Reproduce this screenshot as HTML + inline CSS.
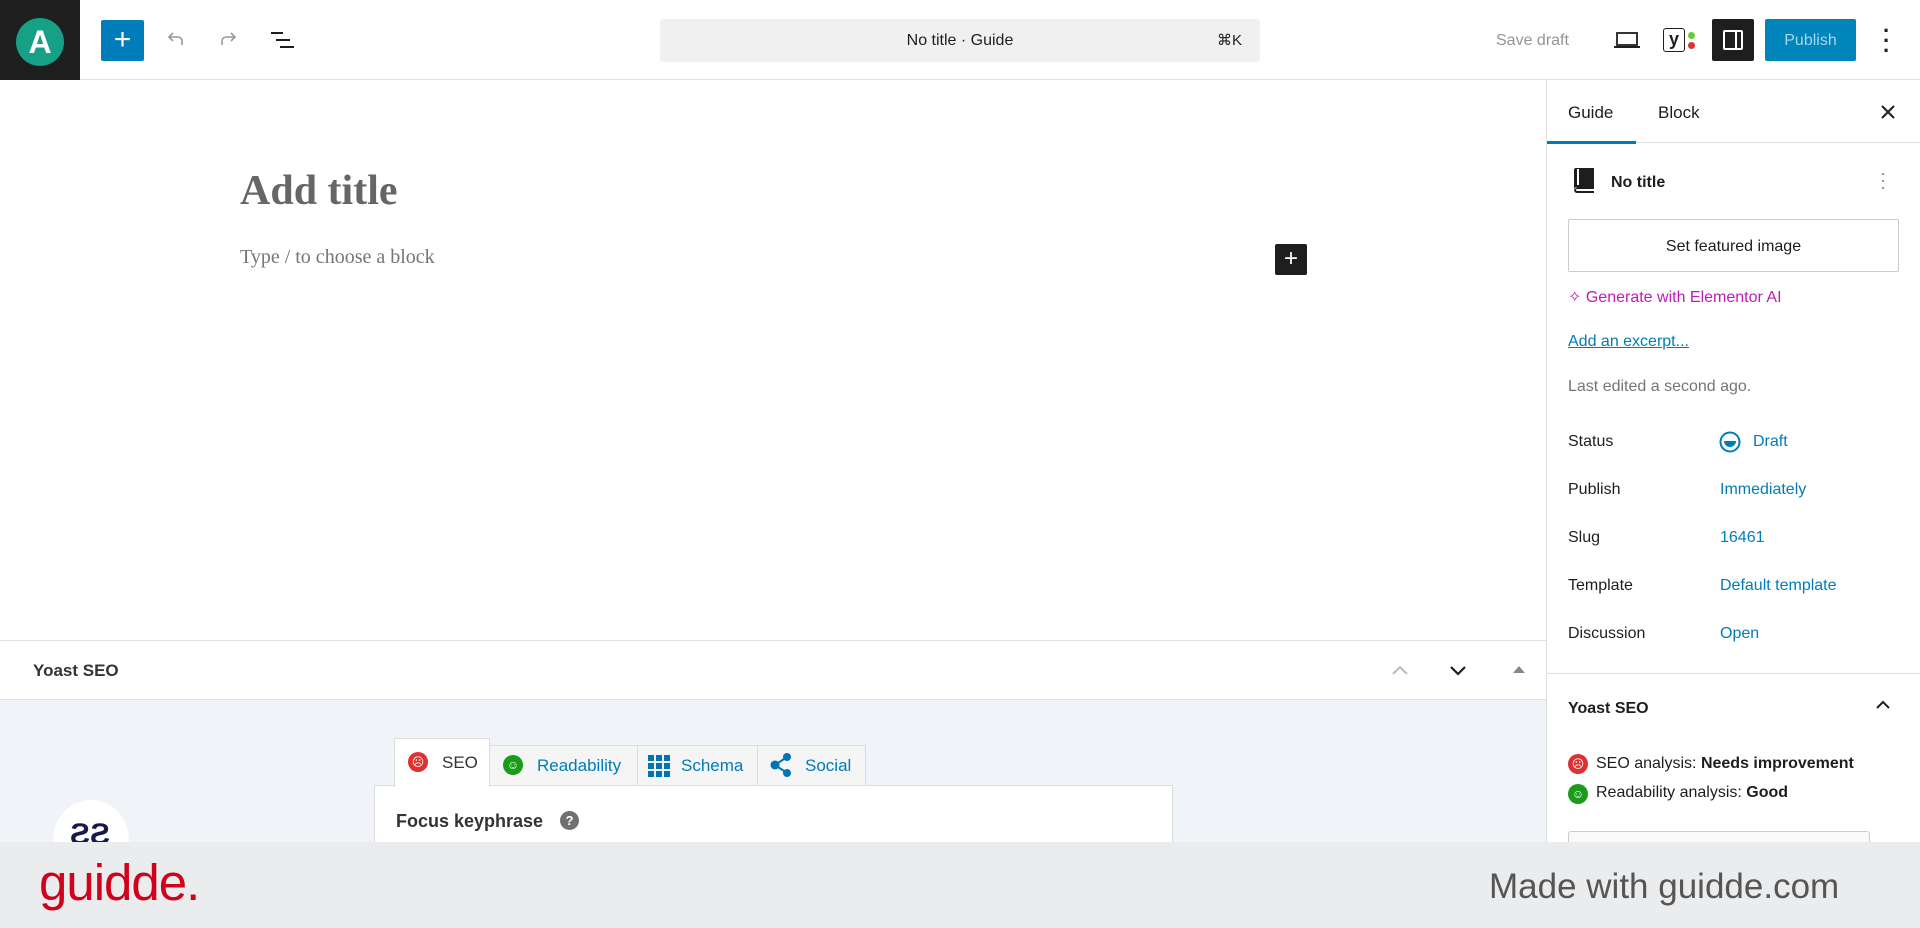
<!DOCTYPE html>
<html><head><meta charset="utf-8"><style>
*{box-sizing:border-box;margin:0;padding:0}
body{width:1920px;height:928px;overflow:hidden;background:#fff;font-family:"Liberation Sans",sans-serif;color:#1e1e1e;position:relative}
.a{position:absolute}
.blue{color:#007cba}
</style></head><body>
<!-- header -->
<div class="a" style="left:0;top:0;width:1920px;height:80px;border-bottom:1px solid #e0e0e0;background:#fff"></div>
<div class="a" style="left:0;top:0;width:80px;height:80px;background:#1e1e1e"></div>
<div class="a" style="left:16px;top:18px;width:48px;height:48px;border-radius:50%;background:#16a085;color:#fff;font-weight:bold;font-size:32px;text-align:center;line-height:48px">A</div>
<div class="a" style="left:101px;top:20px;width:43px;height:41px;background:#007cba;border-radius:2px;color:#fff;font-size:30px;text-align:center;line-height:40px">+</div>
<svg class="a" style="left:164px;top:28px" width="24" height="24" viewBox="0 0 24 24"><path d="M18 17v-4a4 4 0 0 0-4-4H6M9 5L5 9l4 4" fill="none" stroke="#999" stroke-width="1.6"/></svg>
<svg class="a" style="left:216px;top:28px" width="24" height="24" viewBox="0 0 24 24"><path d="M6 17v-4a4 4 0 0 1 4-4h8M15 5l4 4-4 4" fill="none" stroke="#999" stroke-width="1.6"/></svg>
<svg class="a" style="left:270px;top:30px" width="26" height="24" viewBox="0 0 26 24"><path d="M1 3h12M6 10h14M10 17h14" stroke="#1e1e1e" stroke-width="2"/></svg>
<div class="a" style="left:660px;top:19px;width:600px;height:43px;background:#f0f0f0;border-radius:3px;font-size:16px;line-height:43px;text-align:center">No title · Guide<span class="a" style="right:18px;top:0;font-size:15px">⌘K</span></div>
<div class="a" style="left:1496px;top:32px;font-size:16px;color:#949494">Save draft</div>
<svg class="a" style="left:1613px;top:30px" width="28" height="20" viewBox="0 0 28 20"><rect x="4" y="3" width="20" height="12" fill="none" stroke="#1e1e1e" stroke-width="1.8"/><path d="M1 17h26" stroke="#1e1e1e" stroke-width="2"/></svg>
<div class="a" style="left:1663px;top:28px;width:22px;height:24px;border:1.5px solid #1e1e1e;border-radius:3px;font-weight:bold;font-size:18px;line-height:20px;text-align:center">y</div>
<div class="a" style="left:1688px;top:32px;width:7px;height:7px;border-radius:50%;background:#6c3"></div>
<div class="a" style="left:1688px;top:42px;width:7px;height:7px;border-radius:50%;background:#dc3232"></div>
<div class="a" style="left:1712px;top:19px;width:42px;height:42px;background:#1e1e1e;border-radius:2px"></div>
<div class="a" style="left:1723px;top:30px;width:20px;height:20px;border:2px solid #fff;border-radius:2px"></div>
<div class="a" style="left:1735px;top:30px;width:2px;height:20px;background:#fff"></div>
<div class="a" style="left:1765px;top:19px;width:91px;height:42px;background:#0085ba;border-radius:2px;color:#a8d4ec;font-size:16px;line-height:44px;text-align:center">Publish</div>
<div class="a" style="left:1883px;top:26px;font-size:22px;line-height:10px;font-weight:bold">·<br>·<br>·</div>
<!-- editor -->
<div class="a" style="left:240px;top:167px;font-family:'Liberation Serif',serif;font-weight:bold;font-size:42px;color:#666">Add title</div>
<div class="a" style="left:240px;top:246px;font-family:'Liberation Serif',serif;font-size:20px;color:#757575">Type / to choose a block</div>
<div class="a" style="left:1275px;top:244px;width:32px;height:31px;background:#1e1e1e;border-radius:2px;color:#fff;font-size:24px;line-height:30px;text-align:center">+</div>
<!-- yoast panel -->
<div class="a" style="left:0;top:640px;width:1547px;height:60px;border-top:1px solid #e0e0e0;border-bottom:1px solid #e0e0e0;background:#fff"></div>
<div class="a" style="left:33px;top:661px;font-size:17px;font-weight:bold;color:#333">Yoast SEO</div>
<svg class="a" style="left:1390px;top:662px" width="20" height="16"><path d="M3 12l7-7 7 7" fill="none" stroke="#bbb" stroke-width="2"/></svg>
<svg class="a" style="left:1448px;top:662px" width="20" height="16"><path d="M3 5l7 7 7-7" fill="none" stroke="#1e1e1e" stroke-width="2.2"/></svg>
<svg class="a" style="left:1512px;top:664px" width="14" height="10"><path d="M1 9L7 2l6 7z" fill="#888"/></svg>
<div class="a" style="left:0;top:700px;width:1547px;height:142px;background:#f0f3f7"></div>
<div class="a" style="left:53px;top:800px;width:76px;height:80px;border-radius:50%;background:#fff"></div>
<div class="a" style="left:70px;top:818px;font-size:30px;font-weight:bold;color:#1a1848">ƧƧ</div>
<div class="a" style="left:374px;top:785px;width:799px;height:80px;background:#fff;border:1px solid #ddd"></div>
<div class="a" style="left:489px;top:745px;width:377px;height:41px;background:#f5f5f5;border:1px solid #ddd"></div>
<div class="a" style="left:637px;top:745px;width:1px;height:41px;background:#ddd"></div>
<div class="a" style="left:757px;top:745px;width:1px;height:41px;background:#ddd"></div>
<div class="a" style="left:394px;top:738px;width:96px;height:49px;background:#fff;border:1px solid #ddd;border-bottom:none"></div>
<div class="a" style="left:408px;top:752px;width:20px;height:20px;border-radius:50%;background:#dc3232;color:#fff;font-size:12px;line-height:20px;text-align:center">☹</div>
<div class="a" style="left:442px;top:753px;font-size:17px;color:#333">SEO</div>
<div class="a" style="left:503px;top:755px;width:20px;height:20px;border-radius:50%;background:#1a9c1a;color:#fff;font-size:12px;line-height:20px;text-align:center">☺</div>
<div class="a blue" style="left:537px;top:756px;font-size:17px">Readability</div>
<svg class="a" style="left:648px;top:755px" width="22" height="22"><g fill="#0075b3"><rect x="0" y="0" width="6" height="6"/><rect x="8" y="0" width="6" height="6"/><rect x="16" y="0" width="6" height="6"/><rect x="0" y="8" width="6" height="6"/><rect x="8" y="8" width="6" height="6"/><rect x="16" y="8" width="6" height="6"/><rect x="0" y="16" width="6" height="6"/><rect x="8" y="16" width="6" height="6"/><rect x="16" y="16" width="6" height="6"/></g></svg>
<div class="a blue" style="left:681px;top:756px;font-size:17px">Schema</div>
<svg class="a" style="left:770px;top:753px" width="22" height="24"><g fill="#0075b3"><circle cx="17" cy="4" r="4"/><circle cx="5" cy="12" r="4.5"/><circle cx="17" cy="20" r="4"/></g><path d="M17 4L5 12l12 8" stroke="#0075b3" stroke-width="2" fill="none"/></svg>
<div class="a blue" style="left:805px;top:756px;font-size:17px">Social</div>
<div class="a" style="left:396px;top:811px;font-size:18px;font-weight:bold;color:#333">Focus keyphrase</div>
<div class="a" style="left:560px;top:811px;width:19px;height:19px;border-radius:50%;background:#707070;color:#fff;font-size:13px;font-weight:bold;line-height:19px;text-align:center">?</div>
<!-- sidebar -->
<div class="a" style="left:1546px;top:80px;width:1px;height:848px;background:#e0e0e0"></div>
<div class="a" style="left:1547px;top:142px;width:373px;height:1px;background:#e0e0e0"></div>
<div class="a" style="left:1547px;top:141px;width:89px;height:3px;background:#007cba"></div>
<div class="a" style="left:1568px;top:103px;font-size:17px">Guide</div>
<div class="a" style="left:1658px;top:103px;font-size:17px">Block</div>
<svg class="a" style="left:1880px;top:104px" width="16" height="16"><path d="M2 2l12 12M14 2L2 14" stroke="#1e1e1e" stroke-width="2"/></svg>
<svg class="a" style="left:1572px;top:167px" width="24" height="26" viewBox="0 0 24 26"><path d="M2 3a2 2 0 0 1 2-2h18v19H5a3 3 0 0 0-3 3z" fill="#1e1e1e"/><path d="M2 23a3 3 0 0 0 3 3h17v-2H5a1 1 0 0 1 0-2h17v-2H5" fill="#1e1e1e"/><rect x="5" y="2" width="2" height="16" fill="#fff"/></svg>
<div class="a" style="left:1611px;top:174px;font-size:16px;font-weight:bold">No title</div>
<div class="a" style="left:1880px;top:170px;font-size:18px;line-height:7px;color:#888">·<br>·<br>·</div>
<div class="a" style="left:1568px;top:219px;width:331px;height:53px;border:1px solid #ccc;border-radius:2px;font-size:16px;line-height:54px;text-align:center">Set featured image</div>
<div class="a" style="left:1568px;top:287px;font-size:16px;color:#c01ab8">✧ Generate with Elementor AI</div>
<div class="a blue" style="left:1568px;top:333px;font-size:16px;text-decoration:underline">Add an excerpt...</div>
<div class="a" style="left:1568px;top:378px;font-size:16px;color:#757575">Last edited a second ago.</div>
<div class="a" style="left:1568px;top:433px;font-size:16px">Status</div>
<svg class="a" style="left:1719px;top:431px" width="22" height="22" viewBox="0 0 22 22"><circle cx="11" cy="11" r="9.5" fill="none" stroke="#007cba" stroke-width="2"/><path d="M5 10h12a6 6 0 0 1-12 0z" fill="#007cba"/></svg>
<div class="a blue" style="left:1753px;top:433px;font-size:16px">Draft</div>
<div class="a" style="left:1568px;top:481px;font-size:16px">Publish</div>
<div class="a blue" style="left:1720px;top:481px;font-size:16px">Immediately</div>
<div class="a" style="left:1568px;top:529px;font-size:16px">Slug</div>
<div class="a blue" style="left:1720px;top:529px;font-size:16px">16461</div>
<div class="a" style="left:1568px;top:577px;font-size:16px">Template</div>
<div class="a blue" style="left:1720px;top:577px;font-size:16px">Default template</div>
<div class="a" style="left:1568px;top:625px;font-size:16px">Discussion</div>
<div class="a blue" style="left:1720px;top:625px;font-size:16px">Open</div>
<div class="a" style="left:1547px;top:673px;width:373px;height:1px;background:#e0e0e0"></div>
<div class="a" style="left:1568px;top:700px;font-size:16px;font-weight:bold">Yoast SEO</div>
<svg class="a" style="left:1874px;top:699px" width="18" height="12"><path d="M3 9l6-6 6 6" fill="none" stroke="#1e1e1e" stroke-width="2"/></svg>
<div class="a" style="left:1568px;top:754px;width:20px;height:20px;border-radius:50%;background:#dc3232;color:#fff;font-size:12px;line-height:20px;text-align:center">☹</div>
<div class="a" style="left:1596px;top:755px;font-size:16px">SEO analysis: <b>Needs improvement</b></div>
<div class="a" style="left:1568px;top:784px;width:20px;height:20px;border-radius:50%;background:#1a9c1a;color:#fff;font-size:12px;line-height:20px;text-align:center">☺</div>
<div class="a" style="left:1596px;top:784px;font-size:16px">Readability analysis: <b>Good</b></div>
<div class="a" style="left:1568px;top:831px;width:302px;height:30px;border:1px solid #ccc;border-radius:3px;background:#fafafa"></div>
<!-- footer -->
<div class="a" style="left:0;top:842px;width:1920px;height:86px;background:#ebecee"></div>
<div class="a" style="left:39px;top:853px;font-size:51px;color:#d0021b;letter-spacing:-1px">guidde.</div>
<div class="a" style="left:1489px;top:867px;font-size:35px;color:#555">Made with guidde.com</div>
</body></html>
